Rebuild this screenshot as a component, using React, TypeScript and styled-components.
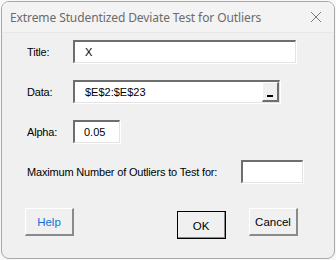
import React from "react"
import styled, { createGlobalStyle } from "styled-components"

const GlobalStyle = createGlobalStyle`
  html, body {
    margin: 0;
    padding: 0;
    background: #f7f7f7;
  }
  body {
    width: 336px;
    height: 260px;
    overflow: hidden;
  }
`

const Window = styled.div`
  margin: 1px 0 0 1px;
  width: 334px;
  height: 258px;
  box-sizing: border-box;
  border: 1px solid #a9a9a9;
  border-radius: 8px;
  background: #f0f0f0;
  overflow: hidden;
  display: flex;
  flex-direction: column;
  font-family: "Liberation Sans", Arial, sans-serif;
  font-size: 11px;
  color: #000;
`

const TitleBar = styled.div`
  height: 30px;
  flex: none;
  background: #f3f3f3;
  display: flex;
  align-items: center;
  justify-content: space-between;
  padding: 0 10px 0 8px;
  border-bottom: 1px solid #e8e8e8;
`

const Caption = styled.span`
  font-family: "Noto Sans", "Open Sans", sans-serif;
  font-size: 12px;
  color: #6b6b6b;
  letter-spacing: -0.1px;
`

const CloseIcon = styled.svg`
  width: 12px;
  height: 12px;
  margin-right: 2px;
`

const Body = styled.div`
  flex: 1;
  padding: 7px 0 0 23px;
  display: flex;
  flex-direction: column;
`

const Row = styled.div`
  display: flex;
  align-items: center;
  height: 23px;
  margin-bottom: 17px;
`

const Label = styled.span<{ $width: number }>`
  width: ${p => p.$width}px;
  flex: none;
  padding-left: 2px;
  box-sizing: border-box;
  letter-spacing: -0.18px;
`

const Field = styled.div<{ $width: number }>`
  width: ${p => p.$width}px;
  height: 23px;
  box-sizing: border-box;
  background: #fff;
  border-style: solid;
  border-width: 2px 1px 1px 2px;
  border-color: #6e6e6e #e3e3e3 #e3e3e3 #6e6e6e;
  box-shadow: 1px 1px 0 #fff;
  display: flex;
  align-items: center;
  padding-left: ${p => (p.$width > 60 ? 10 : 9)}px;
  position: relative;
`

const PickButton = styled.div`
  position: absolute;
  right: 0;
  top: 0;
  width: 17px;
  height: 20px;
  box-sizing: border-box;
  background: #f0f0f0;
  border-style: solid;
  border-width: 1px 2px 2px 1px;
  border-color: #fff #6e6e6e #6e6e6e #fff;
  display: flex;
  align-items: flex-end;
  justify-content: center;
  padding-bottom: 3px;
`

const Bar = styled.div`
  width: 6px;
  height: 2px;
  background: #000;
`

const ButtonRow = styled.div`
  display: flex;
  align-items: flex-start;
  margin-top: 8px;
`

const Button = styled.div<{ $default?: boolean; $link?: boolean }>`
  width: 49px;
  height: 28px;
  box-sizing: border-box;
  background: #f0f0f0;
  border-style: solid;
  border-width: 1px 2px 2px 1px;
  border-color: #fff #8a8a8a #8a8a8a #fff;
  display: flex;
  align-items: center;
  justify-content: center;
  font-size: 11.5px;
  color: ${p => (p.$link ? "#1170d8" : "#000")};
  ${p =>
    p.$default &&
    `
    outline: 1px solid #000;
    outline-offset: -1px;
    margin-top: 3px;
    padding-top: 2px;
  `}
`

const Spacer = styled.div<{ $w: number }>`
  width: ${p => p.$w}px;
  flex: none;
`

export default function App() {
  return (
    <>
      <GlobalStyle />
      <Window>
        <TitleBar>
          <Caption>Extreme Studentized Deviate Test for Outliers</Caption>
          <CloseIcon viewBox="0 0 12 12">
            <path d="M1 1L11 11M11 1L1 11" stroke="#7a7a7a" strokeWidth="1" />
          </CloseIcon>
        </TitleBar>
        <Body>
          <Row>
            <Label $width={48}>Title:</Label>
            <Field $width={223}>X</Field>
          </Row>
          <Row>
            <Label $width={48}>Data:</Label>
            <Field $width={207}>
              $E$2:$E$23
              <PickButton>
                <Bar />
              </PickButton>
            </Field>
          </Row>
          <Row>
            <Label $width={48}>Alpha:</Label>
            <Field $width={47}>0.05</Field>
          </Row>
          <Row>
            <Label $width={216}>Maximum Number of Outliers to Test for:</Label>
            <Field $width={62} />
          </Row>
          <ButtonRow>
            <Button $link>Help</Button>
            <Spacer $w={103} />
            <Button $default>OK</Button>
            <Spacer $w={23} />
            <Button>Cancel</Button>
          </ButtonRow>
        </Body>
      </Window>
    </>
  )
}
